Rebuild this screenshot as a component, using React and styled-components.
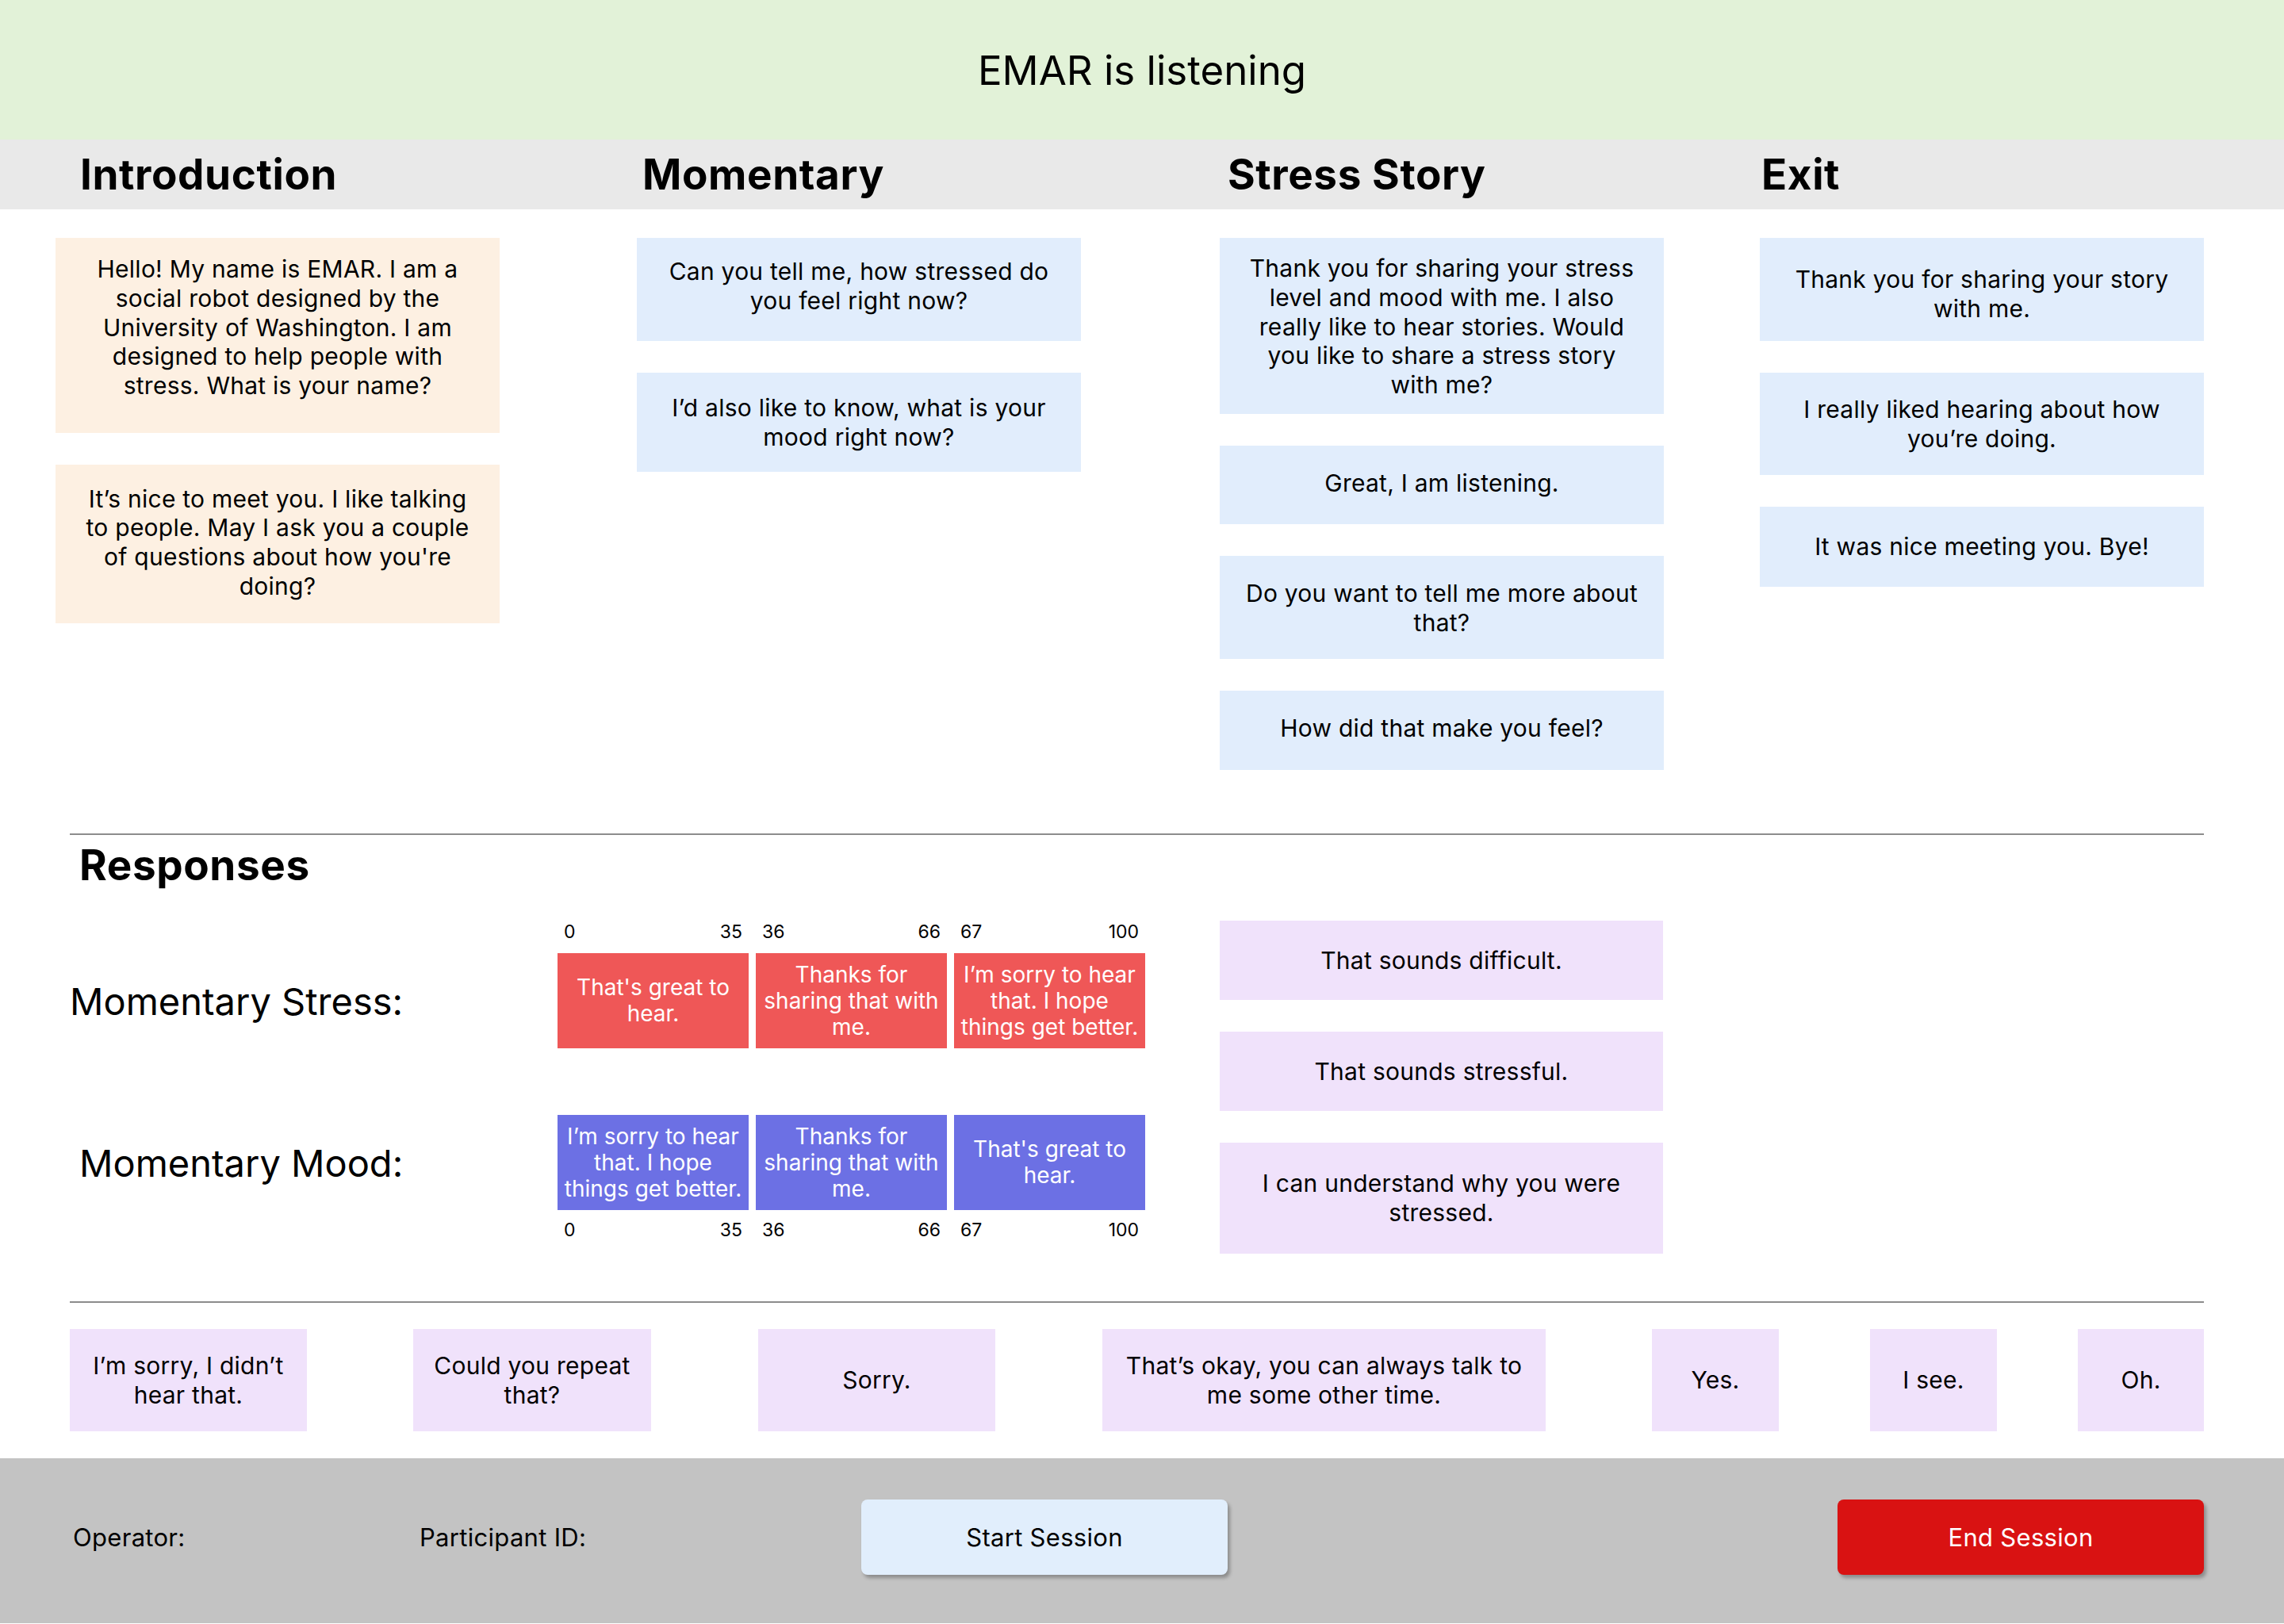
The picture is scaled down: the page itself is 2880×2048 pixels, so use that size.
import styled, { createGlobalStyle } from "styled-components";

const FONT = `Inter, "Noto Sans", "Liberation Sans", sans-serif`;

const GlobalStyle = createGlobalStyle`
  body {
    margin: 0;
    font-family: ${FONT};
    color: #000;
    background: #fff;
  }
`;

const Page = styled.div`
  width: 2880px;
  min-height: 2048px;
  display: flex;
  flex-direction: column;
`;

const TopBar = styled.header`
  height: 176px;
  background: #e2f2d8;
  display: flex;
  align-items: center;
  justify-content: center;
  font-size: 51px;
`;

const HeadBand = styled.div`
  height: 88px;
  background: #e9e9e9;
  display: grid;
  grid-template-columns: 709px 738px 673px 1fr;
  align-items: center;
  padding-left: 101px;
`;

const SectionTitle = styled.h2`
  margin: 0;
  font-size: 53px;
  font-weight: 700;
  letter-spacing: 0.6px;
  line-height: 60px;
`;

const Columns = styled.div`
  display: grid;
  grid-template-columns: 733px 735px 681px 560px;
  align-items: start;
  padding: 36px 0 80px 70px;
`;

const Column = styled.div`
  display: flex;
  flex-direction: column;
  gap: 40px;
`;

// $nudge moves the text block up (negative) or down (positive) inside the card
const Card = styled.div`
  width: ${(p) => p.$w || 560}px;
  height: ${(p) => p.$h}px;
  margin-left: ${(p) => p.$ml || 0}px;
  padding-top: ${(p) => Math.max(0, (p.$nudge || 0) * 2)}px;
  padding-bottom: ${(p) => Math.max(0, -(p.$nudge || 0) * 2)}px;
  flex-shrink: 0;
  box-sizing: border-box;
  display: flex;
  align-items: center;
  justify-content: center;
  text-align: center;
  white-space: pre-line;
  font-size: 30px;
  letter-spacing: 0.25px;
  line-height: 36.7px;
  background: ${(p) =>
    p.$tone === "intro" ? "#fdf0e2" : p.$tone === "reply" ? "#f0e2fb" : "#e1edfc"};
`;

const Divider = styled.hr`
  margin: 0 101px 0 88px;
  border: none;
  height: 2px;
  background: #8c8c8c;
`;

const Responses = styled.section`
  padding: 8px 0 60px 88px;
`;

const ResponsesTitle = styled(SectionTitle)`
  padding-left: 12px;
  margin-bottom: 40px;
`;

const ResponsesBody = styled.div`
  display: flex;
  align-items: flex-start;
`;

const ScaleGroup = styled.div`
  display: flex;
  flex-direction: column;
  gap: 84px;
`;

const ScaleRow = styled.div`
  display: grid;
  grid-template-columns: 615px 741px;
`;

const ScaleLabel = styled.div`
  grid-column: 1;
  grid-row: ${(p) => p.$row};
  align-self: center;
  padding-left: ${(p) => p.$indent || 0}px;
  font-size: 47px;
`;

const Ticks = styled.div`
  grid-column: 2;
  display: grid;
  grid-template-columns: repeat(3, 1fr);
  column-gap: 9px;
  height: 28px;
  margin: ${(p) => (p.$below ? "11px 0 0" : "0 0 13px")};
`;

const Tick = styled.div`
  display: flex;
  justify-content: space-between;
  padding: 0 8px;
  font-size: 23px;
  line-height: 28px;
`;

const Boxes = styled.div`
  grid-column: 2;
  display: grid;
  grid-template-columns: repeat(3, 1fr);
  column-gap: 9px;
  height: 120px;
`;

const Box = styled.div`
  display: flex;
  align-items: center;
  justify-content: center;
  text-align: center;
  white-space: pre-line;
  color: #fff;
  font-size: 28px;
  line-height: 33px;
  background: ${(p) => (p.$kind === "mood" ? "#6c70e4" : "#ef5757")};
`;

const ReplyColumn = styled(Column)`
  margin-left: 94px;
`;

const Fillers = styled.div`
  display: flex;
  padding: 33px 0 34px 88px;
`;

const Footer = styled.footer`
  height: 208px;
  box-sizing: border-box;
  background: #c3c3c3;
  display: flex;
  align-items: center;
  padding: 0 101px 9px 92px;
  font-size: 31px;
  letter-spacing: 0.3px;
`;

const Field = styled.div`
  width: ${(p) => p.$w}px;
`;

const Button = styled.button`
  width: 462px;
  height: 95px;
  border: none;
  border-radius: 8px;
  font-family: ${FONT};
  font-size: 31px;
  letter-spacing: 0.3px;
  cursor: pointer;
  box-shadow: 3px 4px 4px rgba(0, 0, 0, 0.28);
  background: ${(p) => (p.$danger ? "#d91212" : "#e1eefc")};
  color: ${(p) => (p.$danger ? "#fff" : "#000")};
  margin-left: ${(p) => (p.$danger ? "auto" : "0")};
`;

const columns = [
  {
    title: "Introduction",
    tone: "intro",
    cards: [
      ["Hello! My name is EMAR. I am a\nsocial robot designed by the\nUniversity of Washington. I am\ndesigned to help people with\nstress. What is your name?", 246, -10],
      ["It’s nice to meet you. I like talking\nto people. May I ask you a couple\nof questions about how you're\ndoing?", 200, -2],
    ],
  },
  {
    title: "Momentary",
    cards: [
      ["Can you tell me, how stressed do\nyou feel right now?", 130, -4],
      ["I’d also like to know, what is your\nmood right now?", 125, 0],
    ],
  },
  {
    title: "Stress Story",
    cards: [
      ["Thank you for sharing your stress\nlevel and mood with me. I also\nreally like to hear stories. Would\nyou like to share a stress story\nwith me?", 222, 1],
      ["Great, I am listening.", 99, -2],
      ["Do you want to tell me more about\nthat?", 130, 1],
      ["How did that make you feel?", 100, -3],
    ],
  },
  {
    title: "Exit",
    cards: [
      ["Thank you for sharing your story\nwith me.", 130, 6],
      ["I really liked hearing about how\nyou’re doing.", 129, 0],
      ["It was nice meeting you. Bye!", 101, 0],
    ],
  },
];

const happy = "That's great to\nhear.";
const thanks = "Thanks for\nsharing that with\nme.";
const sorry = "I’m sorry to hear\nthat. I hope\nthings get better.";
const ranges = [
  ["0", "35"],
  ["36", "66"],
  ["67", "100"],
];

const replies = [
  ["That sounds difficult.", 100],
  ["That sounds stressful.", 100],
  ["I can understand why you were\nstressed.", 140],
];

const fillers = [
  ["I’m sorry, I didn’t\nhear that.", 299, 0],
  ["Could you repeat\nthat?", 300, 134],
  ["Sorry.", 299, 135],
  ["That’s okay, you can always talk to\nme some other time.", 559, 135],
  ["Yes.", 160, 134],
  ["I see.", 160, 115],
  ["Oh.", 159, 102],
];

function TickRow({ below }) {
  return (
    <Ticks $below={below}>
      {ranges.map(([lo, hi]) => (
        <Tick key={lo}>
          <span>{lo}</span>
          <span>{hi}</span>
        </Tick>
      ))}
    </Ticks>
  );
}

export default function App() {
  return (
    <Page>
      <GlobalStyle />
      <TopBar>EMAR is listening</TopBar>
      <HeadBand>
        {columns.map((c) => (
          <SectionTitle key={c.title}>{c.title}</SectionTitle>
        ))}
      </HeadBand>
      <Columns>
        {columns.map((c) => (
          <Column key={c.title}>
            {c.cards.map(([text, h, nudge]) => (
              <Card key={text} $h={h} $nudge={nudge} $tone={c.tone}>
                {text}
              </Card>
            ))}
          </Column>
        ))}
      </Columns>
      <Divider />
      <Responses>
        <ResponsesTitle>Responses</ResponsesTitle>
        <ResponsesBody>
          <ScaleGroup>
            <ScaleRow>
              <TickRow />
              <ScaleLabel $row={2}>Momentary Stress:</ScaleLabel>
              <Boxes>
                {[happy, thanks, sorry].map((t) => (
                  <Box key={t}>{t}</Box>
                ))}
              </Boxes>
            </ScaleRow>
            <ScaleRow>
              <ScaleLabel $row={1} $indent={12}>
                Momentary Mood:
              </ScaleLabel>
              <Boxes>
                {[sorry, thanks, happy].map((t) => (
                  <Box key={t} $kind="mood">
                    {t}
                  </Box>
                ))}
              </Boxes>
              <TickRow below />
            </ScaleRow>
          </ScaleGroup>
          <ReplyColumn>
            {replies.map(([text, h]) => (
              <Card key={text} $h={h} $w={559} $tone="reply">
                {text}
              </Card>
            ))}
          </ReplyColumn>
        </ResponsesBody>
      </Responses>
      <Divider />
      <Fillers>
        {fillers.map(([text, w, ml]) => (
          <Card key={text} $h={129} $w={w} $ml={ml} $tone="reply">
            {text}
          </Card>
        ))}
      </Fillers>
      <Footer>
        <Field $w={437}>Operator:</Field>
        <Field $w={557}>Participant ID:</Field>
        <Button>Start Session</Button>
        <Button $danger>End Session</Button>
      </Footer>
    </Page>
  );
}
